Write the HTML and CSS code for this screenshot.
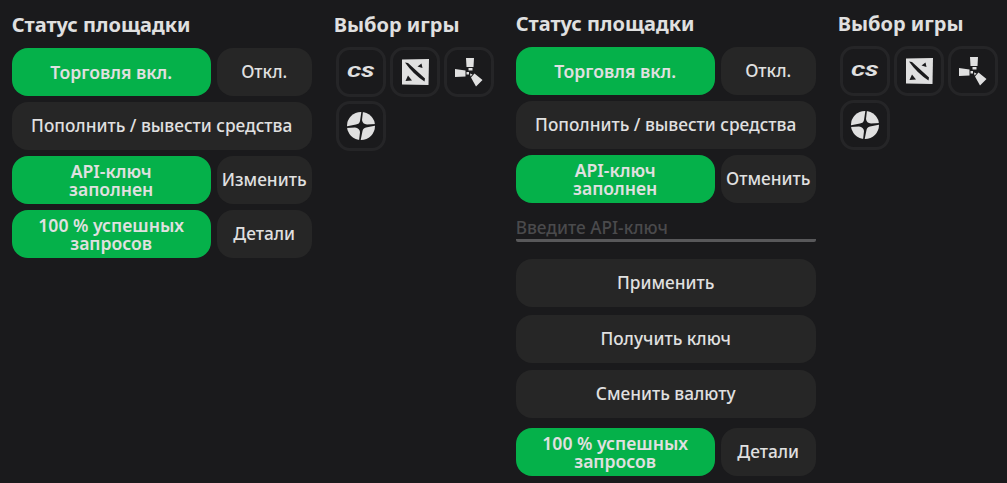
FILE: index.html
```html
<!DOCTYPE html>
<html lang="en">
<head>
    <meta charset="UTF-8">
    <meta name="viewport" content="width=device-width, initial-scale=1.0">
    <title>Статус площадки</title>
    <link rel="stylesheet" href="styles.css">
</head>
<body>
    <div class="page">
        <!-- Closed state -->
        <div class="block block-first">
            <div class="status">
                <h2>Статус площадки</h2>
                <div class="row">
                    <button class="btn btn-green">Торговля вкл.</button>
                    <button class="btn btn-side">Откл.</button>
                </div>
                <button class="btn">Пополнить / вывести средства</button>
                <div class="row">
                    <button class="btn btn-green">API-ключ<br>заполнен</button>
                    <button class="btn btn-side">Изменить</button>
                </div>
                <div class="row">
                    <button class="btn btn-green">100 % успешных<br>запросов</button>
                    <button class="btn btn-side">Детали</button>
                </div>
            </div>
            <div class="games">
                <h2>Выбор игры</h2>
                <div class="game-list">
                    <div class="game">
                        <svg viewBox="0 0 32 32"><text x="15.5" y="21" class="cs-logo" textLength="27" lengthAdjust="spacingAndGlyphs">CS</text></svg>
                    </div>
                    <div class="game">
                        <svg viewBox="0 0 32 32"><path d="M3 3.500 30 3l-.5 26L3 28.500z"/><path class="cut" d="M6 6.500 9 7 26 22.500 25.500 25.500Q14 18 6 6.500zM22.500 7.500 23.500 12 18.500 10.500zM9 19.500 13 24.500 6.500 25z"/></svg>
                    </div>
                    <div class="game">
                        <svg viewBox="0 0 32 32"><path d="M13 2h8l-.5 9h-7zM15.500 12h4v2.500h-4zM2 13l10.500 1.500v6L2 21zM13.500 16h2.500v2.500h-2.500zM21.500 17.500 29.500 24l-6.500 6.500-5-9zM17 17.500l2.500 1-2 2z"/></svg>
                    </div>
                    <div class="game">
                        <svg viewBox="0 0 32 32"><circle cx="16" cy="16" r="14"/><path class="cut" d="M18 1 17 10Q17.500 14 22 14.500L31 14 31 15.500 21 17.500Q18 18 17.500 21L15.500 31 14 31 15 22Q14.500 18 10 17.500L1 18 1 16.500 11 14.500Q14.500 14 15 11L16.500 1z"/></svg>
                    </div>
                </div>
            </div>
        </div>

        <!-- Open state, API key form -->
        <div class="block">
            <div class="status">
                <h2>Статус площадки</h2>
                <div class="row">
                    <button class="btn btn-green">Торговля вкл.</button>
                    <button class="btn btn-side">Откл.</button>
                </div>
                <button class="btn">Пополнить / вывести средства</button>
                <div class="row">
                    <button class="btn btn-green">API-ключ<br>заполнен</button>
                    <button class="btn btn-side">Отменить</button>
                </div>
                <input class="key-input" type="text" placeholder="Введите API-ключ">
                <button class="btn">Применить</button>
                <button class="btn btn-spaced">Получить ключ</button>
                <button class="btn btn-spaced">Сменить валюту</button>
                <div class="row row-spaced">
                    <button class="btn btn-green">100 % успешных<br>запросов</button>
                    <button class="btn btn-side">Детали</button>
                </div>
            </div>
            <div class="games">
                <h2>Выбор игры</h2>
                <div class="game-list">
                    <div class="game">
                        <svg viewBox="0 0 32 32"><text x="15.5" y="21" class="cs-logo" textLength="27" lengthAdjust="spacingAndGlyphs">CS</text></svg>
                    </div>
                    <div class="game">
                        <svg viewBox="0 0 32 32"><path d="M3 3.500 30 3l-.5 26L3 28.500z"/><path class="cut" d="M6 6.500 9 7 26 22.500 25.500 25.500Q14 18 6 6.500zM22.500 7.500 23.500 12 18.500 10.500zM9 19.500 13 24.500 6.500 25z"/></svg>
                    </div>
                    <div class="game">
                        <svg viewBox="0 0 32 32"><path d="M13 2h8l-.5 9h-7zM15.500 12h4v2.500h-4zM2 13l10.500 1.500v6L2 21zM13.500 16h2.500v2.500h-2.500zM21.500 17.500 29.500 24l-6.500 6.500-5-9zM17 17.500l2.500 1-2 2z"/></svg>
                    </div>
                    <div class="game">
                        <svg viewBox="0 0 32 32"><circle cx="16" cy="16" r="14"/><path class="cut" d="M18 1 17 10Q17.500 14 22 14.500L31 14 31 15.500 21 17.500Q18 18 17.500 21L15.500 31 14 31 15 22Q14.500 18 10 17.500L1 18 1 16.500 11 14.500Q14.500 14 15 11L16.500 1z"/></svg>
                    </div>
                </div>
            </div>
        </div>
    </div>
</body>
</html>
```
FILE: styles.css
```css
body {
    font-family: "Noto Sans", "Open Sans", Arial, sans-serif;
    margin: 0;
    background-color: #1a1a1c;
    color: #e0e0e0;
    overflow: hidden;
}

.page {
    display: flex;
    padding: 0 0 0 11.7px;
}

.block {
    display: flex;
    gap: 24px;
    width: 504px;
    flex: 0 0 504px;
}

.block-first {
    padding-top: 1px;
}

.status {
    width: 300px;
    display: flex;
    flex-direction: column;
    gap: 6px;
}

h2 {
    margin: 12px 0 5px;
    font-size: 20px;
    line-height: 24px;
    font-weight: 700;
    color: #e0e0e0;
}

.row {
    display: flex;
    gap: 6px;
}

.btn {
    display: block;
    width: 100%;
    height: 48px;
    padding: 0;
    border: none;
    border-radius: 16px;
    background: #262626;
    color: #e0e0e0;
    font-family: inherit;
    font-size: 17.25px;
    line-height: 18px;
    font-weight: 500;
    cursor: pointer;
}

.btn-green {
    flex: 0 0 199px;
    width: 199px;
    background: #05b14a;
    font-size: 17.6px;
    font-weight: 600;
}

.btn-side {
    flex: 1;
    width: auto;
}

.btn-spaced {
    margin-top: 1.5px;
}

.row-spaced {
    margin-top: 4px;
}

.key-input {
    box-sizing: border-box;
    height: 30px;
    margin: 3px 0 11px;
    padding: 3px 0 0;
    background: transparent;
    border: none;
    border-bottom: 3px solid #58585a;
    border-radius: 2px;
    color: #e0e0e0;
    font-family: inherit;
    font-size: 17.25px;
    font-weight: 500;
    outline: none;
}

.key-input::placeholder {
    color: #4a4a4c;
}

.games h2 {
    margin-left: -2px;
    margin-bottom: 10px;
}

.game-list {
    display: flex;
    flex-wrap: wrap;
    gap: 4px;
    width: 158px;
}

.game {
    box-sizing: border-box;
    width: 50px;
    height: 50px;
    border: 3px solid #252527;
    border-radius: 14px;
    display: flex;
    align-items: center;
    justify-content: center;
}

.game svg {
    width: 32px;
    height: 32px;
    fill: #e0e0e0;
}

.game .cut {
    fill: #1a1a1c;
}

.cs-logo {
    font-family: Roboto, Arial, sans-serif;
    font-size: 14px;
    font-weight: 900;
    font-style: italic;
    text-anchor: middle;
}
```
